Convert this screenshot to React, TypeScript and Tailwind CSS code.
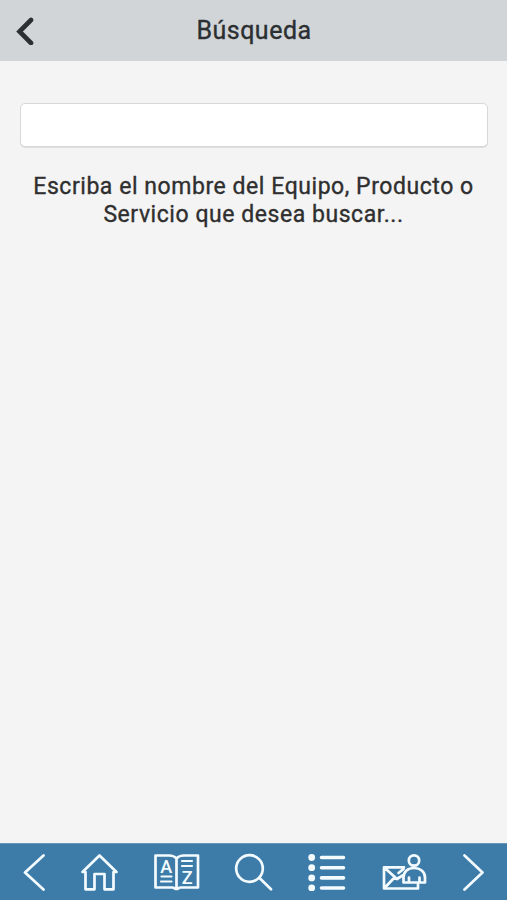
import type { ReactNode } from "react";

type IconProps = { width: number; label: string; children: ReactNode };

// Every toolbar icon shares the same 38px tall stroke canvas.
function NavIcon({ width, label, children }: IconProps) {
  return (
    <button type="button" aria-label={label} className="shrink-0">
      <svg
        width={width}
        height={38}
        viewBox={`0 0 ${width} 38`}
        fill="none"
        stroke="currentColor"
        strokeWidth={2.7}
        strokeLinecap="round"
        strokeLinejoin="round"
        className="block"
      >
        {children}
      </svg>
    </button>
  );
}

function Header() {
  return (
    <header className="grid h-[61px] shrink-0 grid-cols-[60px_1fr_60px] items-center bg-[#d1d5d8] text-[#2b2f31]">
      <button type="button" aria-label="Volver" className="pl-4">
        <svg width="18" height="28" viewBox="0 0 18 28" fill="none" className="block">
          <path
            d="M15 3 3.5 14.5 15 26"
            stroke="currentColor"
            strokeWidth="4.6"
            strokeLinecap="round"
            strokeLinejoin="miter"
          />
        </svg>
      </button>
      <h1 className="pl-px text-center text-[25px] tracking-[0.5px] [-webkit-text-stroke:0.35px]">Búsqueda</h1>
    </header>
  );
}

function Toolbar() {
  return (
    <nav className="flex h-[57px] shrink-0 items-center gap-[34px] border-t border-[#6796b8] bg-[#3d7ca8] pb-px pl-[23px] text-[#f4fbff]">
      <NavIcon width={23} label="Anterior">
        <path d="M20.5 2.5 2 19.5l18.5 17" />
      </NavIcon>
      <NavIcon width={39} label="Inicio">
        <path d="M5.500 19H2.500L19.500 2.500 36.500 19H33.500V36.300H24.500V21H14.500V36.300H5.500Z" />
      </NavIcon>
      <NavIcon width={47} label="Catálogo">
        <path d="M23.500 5.500C21.500 3 19 2.500 16 2.500H2.500V34.500H19.500C21 34.500 22 36 23.500 36S26 34.500 27.500 34.500H45V2.500H31C28 2.500 25.500 3 23.500 5.500ZM23.500 5.500V35" />
        <path strokeWidth={2.2} d="M8.500 23.500h10M8 28.500h10.500M29 8h10M29 13h10" />
        <g fill="currentColor" stroke="none" fontFamily="Roboto, sans-serif" fontWeight="500" textAnchor="middle">
          <text x="13.300" y="19.500" fontSize="18">A</text>
          <text x="34.300" y="30.500" fontSize="18">Z</text>
        </g>
      </NavIcon>
      <NavIcon width={40} label="Buscar">
        <circle cx="15.500" cy="15.500" r="13.300" />
        <path d="m25.500 25 11.500 11.200" />
      </NavIcon>
      <NavIcon width={40} label="Lista">
        <path strokeWidth={3.6} d="M13.500 4.500h22M13.500 14.700h22M13.500 24.900h22M13.500 35h22" />
        <g fill="currentColor" stroke="none">
          <circle cx="3.700" cy="4.500" r="3.400" />
          <circle cx="3.700" cy="14.700" r="3.400" />
          <circle cx="3.700" cy="24.900" r="3.400" />
          <circle cx="3.700" cy="35" r="3.400" />
        </g>
      </NavIcon>
      <NavIcon width={46} label="Contacto">
        <circle cx="32" cy="7.500" r="5.200" />
        <path d="M22 14.300H2V35.500H36V31M2.500 14.800 15 26 20.500 22.500M2.500 35 12.500 24.500M16.500 20 21.500 16" />
        <path d="M21.500 29.500V24.500C21.500 18.500 26 15 32 15S43 18.500 43 24.500V29.500ZM27 29V24.500M37.500 29V24.500" />
      </NavIcon>
      <NavIcon width={23} label="Siguiente">
        <path d="m2.500 2.500 18 17-18 17" />
      </NavIcon>
    </nav>
  );
}

export default function App() {
  return (
    <div className="flex h-screen flex-col bg-[#f4f4f4] font-['Roboto',sans-serif] text-[#2f2f2f]">
      <Header />
      <main className="flex-1 px-5 pt-[42px]">
        <input
          type="text"
          aria-label="Búsqueda"
          className="block h-[44px] w-[468px] rounded-[5px] border border-[#d8d8d8] bg-white px-3 shadow-[0_1px_0_#dedede] outline-none"
        />
        <p className="mt-[26px] text-center text-[23px] leading-[28px] tracking-[0.55px] [-webkit-text-stroke:0.35px]">
          Escriba el nombre del Equipo, Producto o
          <br />
          Servicio que desea buscar...
        </p>
      </main>
      <Toolbar />
    </div>
  );
}
